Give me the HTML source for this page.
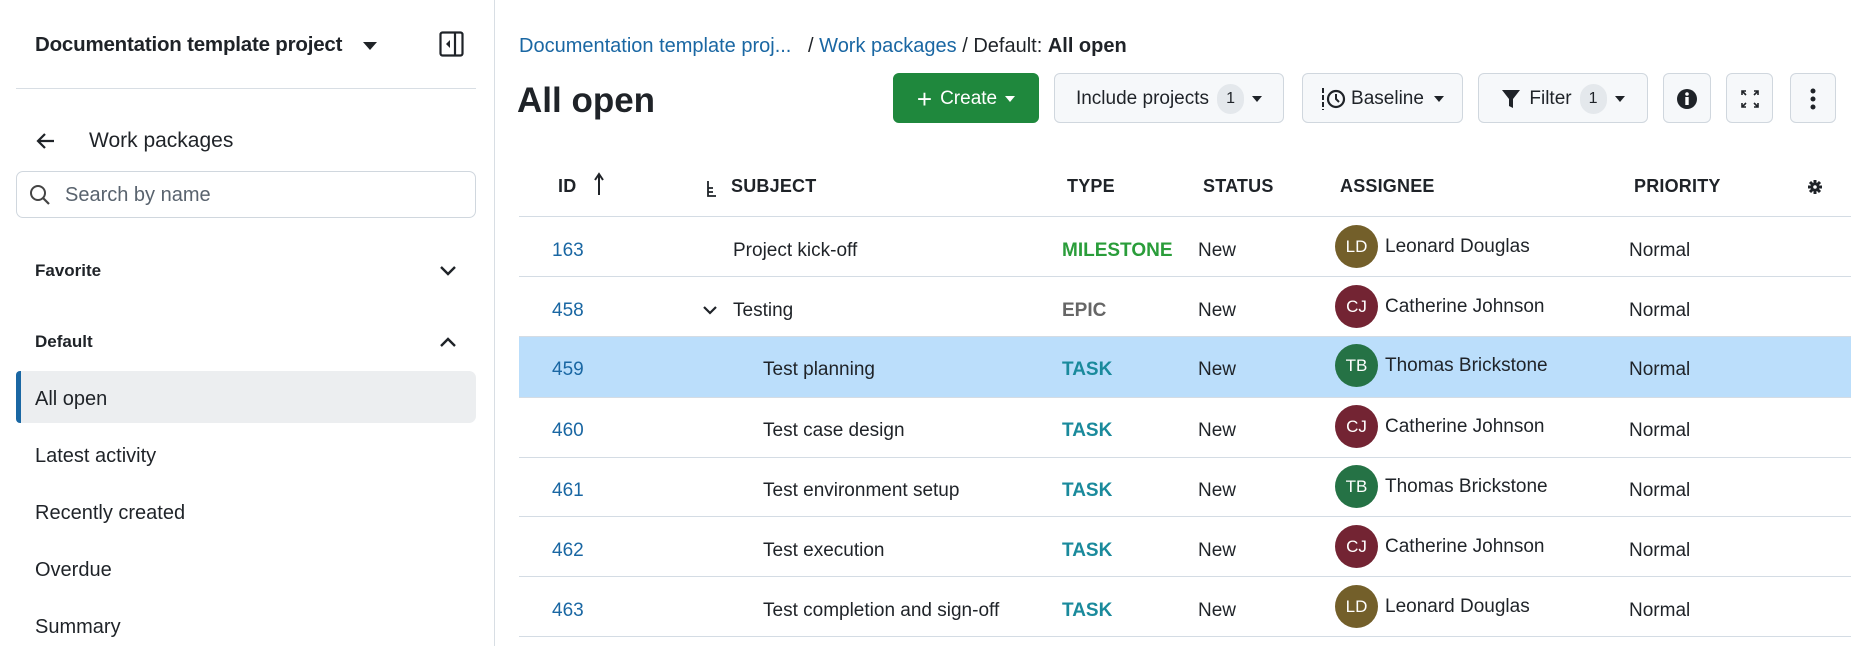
<!DOCTYPE html>
<html><head><meta charset="utf-8"><style>
*{box-sizing:border-box;margin:0;padding:0}
body{width:1851px;height:646px;overflow:hidden;background:#fff;font-family:"Liberation Sans",sans-serif;color:#1f2328;position:relative;font-size:19px}
.a{position:absolute;white-space:nowrap}
.side{position:absolute;left:0;top:0;width:495px;height:646px;border-right:1px solid #d8dee4}
.btn{position:absolute;top:73px;height:50px;border:1px solid #d0d7de;background:#f6f8fa;border-radius:6px;display:flex;align-items:center;justify-content:center;font-size:19px;color:#1f2328;gap:8px;padding-top:2px}
.cnt{display:inline-block;background:#e4e8ec;border-radius:14px;width:27px;height:30px;line-height:30px;text-align:center;font-size:16px}
.car{width:0;height:0;border-left:5px solid transparent;border-right:5px solid transparent;border-top:6px solid #1f2328;display:inline-block}
.hl{position:absolute;left:519px;width:1332px;height:1px;background:#d4dce4}
.row{position:absolute;left:519px;width:1332px;height:60px}
.cell{position:absolute;top:4px;height:60px;line-height:60px;white-space:nowrap}
.av{position:absolute;left:816px;top:8px;width:43px;height:43px;border-radius:50%;color:#fff;font-size:17px;text-align:center;line-height:43px}
.th{position:absolute;top:176px;font-weight:bold;font-size:18px;letter-spacing:.2px}
.link{color:#1a67a3}
</style></head><body>
<div class="side">
 <div class="a" style="left:35px;top:33px;font-size:20.5px;font-weight:bold;letter-spacing:-0.2px">Documentation template project</div>
 <div class="a car" style="left:363px;top:42px;border-left-width:7px;border-right-width:7px;border-top-width:8px"></div>
 <svg class="a" style="left:439px;top:31px" width="26" height="27" viewBox="0 0 26 27"><rect x="1.5" y="1.5" width="22" height="23" rx="2" fill="none" stroke="#1f2328" stroke-width="2.2"/><line x1="16" y1="2" x2="16" y2="25" stroke="#1f2328" stroke-width="2.2"/><path d="M11 9 L7 13 L11 17Z" fill="#1f2328"/></svg>
 <div class="a" style="left:16px;top:88px;width:460px;height:1px;background:#d8dee4"></div>
 <svg class="a" style="left:36px;top:132px" width="20" height="18" viewBox="0 0 20 18"><path d="M9 2 L2 9 L9 16 M2 9 H18" fill="none" stroke="#1f2328" stroke-width="2.2"/></svg>
 <div class="a" style="left:89px;top:129px;font-size:21px">Work packages</div>
 <div class="a" style="left:16px;top:171px;width:460px;height:47px;border:1px solid #d0d7de;border-radius:7px"></div>
 <svg class="a" style="left:29px;top:184px" width="22" height="22" viewBox="0 0 22 22"><circle cx="9" cy="9" r="7" fill="none" stroke="#444" stroke-width="2"/><line x1="14" y1="14" x2="20" y2="20" stroke="#444" stroke-width="2.2"/></svg>
 <div class="a" style="left:65px;top:184px;font-size:20px;color:#59636e">Search by name</div>
 <div class="a" style="left:35px;top:261px;font-size:17px;font-weight:bold">Favorite</div>
 <svg class="a" style="left:439px;top:265px" width="18" height="12" viewBox="0 0 18 12"><path d="M2 2 L9 9 L16 2" fill="none" stroke="#1f2328" stroke-width="2.4"/></svg>
 <div class="a" style="left:35px;top:332px;font-size:17px;font-weight:bold">Default</div>
 <svg class="a" style="left:439px;top:336px" width="18" height="12" viewBox="0 0 18 12"><path d="M2 10 L9 3 L16 10" fill="none" stroke="#1f2328" stroke-width="2.4"/></svg>
 <div class="a" style="left:16px;top:371px;width:460px;height:52px;background:#eceef0;border-radius:7px"></div>
 <div class="a" style="left:16px;top:371px;width:5px;height:52px;background:#1a67a3;border-radius:4px 0 0 4px"></div>
 <div class="a" style="left:35px;top:388px;font-size:20px">All open</div>
 <div class="a" style="left:35px;top:445px;font-size:20px">Latest activity</div>
 <div class="a" style="left:35px;top:502px;font-size:20px">Recently created</div>
 <div class="a" style="left:35px;top:559px;font-size:20px">Overdue</div>
 <div class="a" style="left:35px;top:616px;font-size:20px">Summary</div>
</div>

<div class="a" style="left:519px;top:35px;font-size:20px"><span class="link">Documentation template proj...</span>&nbsp;&nbsp; / <span class="link">Work packages</span> / Default: <b>All open</b></div>
<div class="a" style="left:517px;top:81px;font-size:35px;font-weight:bold">All open</div>

<div class="btn" style="left:893px;width:146px;background:#1f883d;border-color:#1f883d;color:#fff"><span style="font-size:26px;line-height:20px;font-weight:300">+</span> Create <span class="car" style="border-top-color:#fff"></span></div>
<div class="btn" style="left:1054px;width:230px">Include projects <span class="cnt">1</span><span class="car"></span></div>
<div class="btn" style="left:1302px;width:161px;gap:4px"><svg width="26" height="24" viewBox="0 0 26 24"><line x1="2" y1="1" x2="2" y2="23" stroke="#1f2328" stroke-width="2" stroke-dasharray="5 2"/><circle cx="15" cy="12" r="8" fill="none" stroke="#1f2328" stroke-width="2.2"/><path d="M15 7 V12 L18 15" fill="none" stroke="#1f2328" stroke-width="2"/></svg><span>Baseline</span> <span class="car" style="margin-left:6px"></span></div>
<div class="btn" style="left:1478px;width:170px"><svg width="20" height="22" viewBox="0 0 20 22"><path d="M1 2 H19 L12 11 V20 L8 18 V11Z" fill="#1f2328"/></svg>Filter <span class="cnt">1</span><span class="car"></span></div>
<div class="btn" style="left:1663px;width:48px"><svg width="22" height="22" viewBox="0 0 22 22"><circle cx="11" cy="11" r="10" fill="#1f2328"/><circle cx="11" cy="6" r="1.8" fill="#fff"/><rect x="9.3" y="9" width="3.4" height="8" fill="#fff"/></svg></div>
<div class="btn" style="left:1726px;width:47px"><svg width="20" height="20" viewBox="0 0 20 20" fill="none" stroke="#1f2328" stroke-width="1.6"><path d="M2 6V2H6M2 2L6 6M14 2H18V6M18 2L14 6M2 14V18H6M2 18L6 14M18 14V18H14M18 18L14 14"/></svg></div>
<div class="btn" style="left:1790px;width:46px"><svg width="6" height="22" viewBox="0 0 6 22" fill="#1f2328"><circle cx="3" cy="3" r="2.5"/><circle cx="3" cy="11" r="2.5"/><circle cx="3" cy="19" r="2.5"/></svg></div>

<div class="th" style="left:558px">ID</div>
<svg class="a" style="left:593px;top:172px" width="12" height="24" viewBox="0 0 12 24"><path d="M6 23 V3 M2 8 L6 2 L10 8" fill="none" stroke="#1f2328" stroke-width="2"/></svg>
<svg class="a" style="left:706px;top:180px" width="12" height="18" viewBox="0 0 12 18"><path d="M2 1 V16 H10 M2 8 H7 M2 12 H7" fill="none" stroke="#1f2328" stroke-width="1.8"/></svg>
<div class="th" style="left:731px">SUBJECT</div>
<div class="th" style="left:1067px">TYPE</div>
<div class="th" style="left:1203px">STATUS</div>
<div class="th" style="left:1340px">ASSIGNEE</div>
<div class="th" style="left:1634px">PRIORITY</div>
<svg class="a" style="left:1807px;top:179px" width="16" height="16" viewBox="0 0 16 16"><g stroke="#1f2328" stroke-width="3"><line x1="8" y1="1" x2="8" y2="15"/><line x1="1" y1="8" x2="15" y2="8"/><line x1="3" y1="3" x2="13" y2="13"/><line x1="13" y1="3" x2="3" y2="13"/></g><circle cx="8" cy="8" r="4.5" fill="#1f2328"/><circle cx="8" cy="8" r="1.8" fill="#fff"/></svg>

<div class="hl" style="top:216px"></div>

<div class="row" style="top:217px"><div class="cell link" style="left:33px">163</div><div class="cell" style="left:214px">Project kick-off</div><div class="cell" style="left:543px;color:#2a9d3a;font-weight:bold">MILESTONE</div><div class="cell" style="left:679px">New</div><div class="av" style="background:#735f2a">LD</div><div class="cell" style="left:866px;top:0">Leonard Douglas</div><div class="cell" style="left:1110px">Normal</div></div>
<div class="hl" style="top:276px"></div>
<div class="row" style="top:277px"><div class="cell link" style="left:33px">458</div><svg class="a" style="left:183px;top:28px" width="16" height="11" viewBox="0 0 16 11"><path d="M2 2 L8 8 L14 2" fill="none" stroke="#1f2328" stroke-width="2.2"/></svg><div class="cell" style="left:214px">Testing</div><div class="cell" style="left:543px;color:#666;font-weight:bold">EPIC</div><div class="cell" style="left:679px">New</div><div class="av" style="background:#732433">CJ</div><div class="cell" style="left:866px;top:0">Catherine Johnson</div><div class="cell" style="left:1110px">Normal</div></div>
<div class="row" style="top:336px;height:61px;background:#bbdefb"><div class="cell link" style="left:33px">459</div><div class="cell" style="left:244px">Test planning</div><div class="cell" style="left:543px;color:#1a8a9c;font-weight:bold">TASK</div><div class="cell" style="left:679px">New</div><div class="av" style="background:#257245">TB</div><div class="cell" style="left:866px;top:0">Thomas Brickstone</div><div class="cell" style="left:1110px">Normal</div></div>
<div class="hl" style="top:336px"></div>
<div class="hl" style="top:397px"></div>
<div class="row" style="top:397px"><div class="cell link" style="left:33px">460</div><div class="cell" style="left:244px">Test case design</div><div class="cell" style="left:543px;color:#1a8a9c;font-weight:bold">TASK</div><div class="cell" style="left:679px">New</div><div class="av" style="background:#732433">CJ</div><div class="cell" style="left:866px;top:0">Catherine Johnson</div><div class="cell" style="left:1110px">Normal</div></div>
<div class="hl" style="top:457px"></div>
<div class="row" style="top:457px"><div class="cell link" style="left:33px">461</div><div class="cell" style="left:244px">Test environment setup</div><div class="cell" style="left:543px;color:#1a8a9c;font-weight:bold">TASK</div><div class="cell" style="left:679px">New</div><div class="av" style="background:#257245">TB</div><div class="cell" style="left:866px;top:0">Thomas Brickstone</div><div class="cell" style="left:1110px">Normal</div></div>
<div class="hl" style="top:516px"></div>
<div class="row" style="top:517px"><div class="cell link" style="left:33px">462</div><div class="cell" style="left:244px">Test execution</div><div class="cell" style="left:543px;color:#1a8a9c;font-weight:bold">TASK</div><div class="cell" style="left:679px">New</div><div class="av" style="background:#732433">CJ</div><div class="cell" style="left:866px;top:0">Catherine Johnson</div><div class="cell" style="left:1110px">Normal</div></div>
<div class="hl" style="top:576px"></div>
<div class="row" style="top:577px"><div class="cell link" style="left:33px">463</div><div class="cell" style="left:244px">Test completion and sign-off</div><div class="cell" style="left:543px;color:#1a8a9c;font-weight:bold">TASK</div><div class="cell" style="left:679px">New</div><div class="av" style="background:#735f2a">LD</div><div class="cell" style="left:866px;top:0">Leonard Douglas</div><div class="cell" style="left:1110px">Normal</div></div>
<div class="hl" style="top:636px"></div>
</body></html>
